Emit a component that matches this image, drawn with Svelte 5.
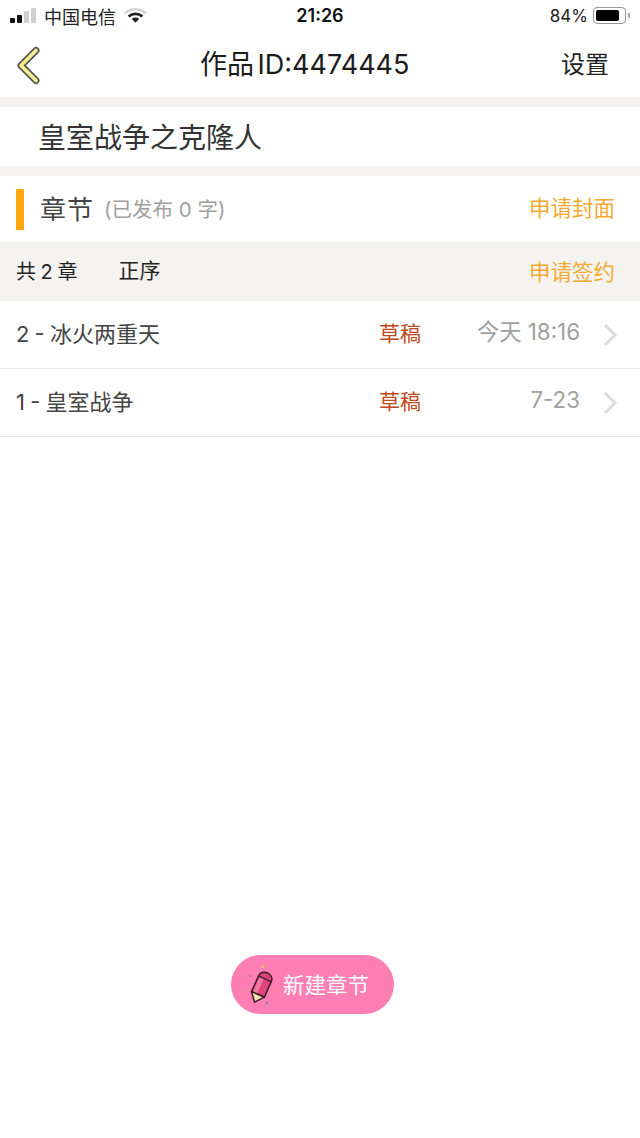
<script>
  const chapters = [
    { title: '2 - 冰火两重天', state: '草稿', time: '今天 18:16' },
    { title: '1 - 皇室战争', state: '草稿', time: '7-23' }
  ];
</script>

<div class="page">
  <div class="status">
    <div class="status-left">
      <span class="signal"><i class="on"></i><i class="on"></i><i></i><i></i></span>
      <span>中国电信</span>
      <svg class="wifi" width="23" height="17" viewBox="0 0 24 17">
        <path d="M1 6.200C7 .6 17 .6 23 6.200" fill="none" stroke="#d4d4d4" stroke-width="2.800"/>
        <path d="M4.800 9.500C9 5.800 15 5.800 19.200 9.500" fill="none" stroke="#222" stroke-width="2.800"/>
        <path d="M8 11.800c2.400-1.600 5.600-1.600 8 0L12 16z" fill="#222"/>
      </svg>
    </div>
    <div class="clock">21:26</div>
    <div class="status-right">
      <span class="pct">84%</span>
      <span class="battery"><b></b></span>
      <span class="nub"></span>
    </div>
  </div>

  <header class="nav">
    <svg class="back" width="28" height="40" viewBox="0 0 28 40">
      <path d="M24 5.500 9 20.500 24 35.500" fill="none" stroke="#555" stroke-width="7" stroke-linecap="round" stroke-linejoin="round"/>
      <path d="M24 5.500 9 20.500 24 35.500" fill="none" stroke="#f7ee90" stroke-width="3.600" stroke-linecap="round" stroke-linejoin="round"/>
    </svg>
    <div class="nav-title">作品 ID:4474445</div>
    <div class="nav-action">设置</div>
  </header>

  <div class="book-title">皇室战争之克隆人</div>

  <div class="section">
    <span class="mark"></span>
    <span class="section-name">章节</span>
    <span class="section-sub">(已发布 0 字)</span>
    <span class="link">申请封面</span>
  </div>

  <div class="toolbar">
    <span class="count">共 2 章</span>
    <span class="sort">正序</span>
    <span class="link">申请签约</span>
  </div>

  {#each chapters as c}
    <div class="row">
      <span class="row-title">{c.title}</span>
      <span class="row-state">{c.state}</span>
      <span class="row-time">{c.time}</span>
      <svg class="chev" width="16" height="26" viewBox="0 0 16 26">
        <path d="M3 3l10 10L3 23" fill="none" stroke="#dcdcdc" stroke-width="3"/>
      </svg>
    </div>
  {/each}

  <div class="spacer">
    <button class="fab">
      <svg class="pencil" width="36" height="40" viewBox="0 0 36 40">
        <circle cx="20" cy="1.500" r="1.600" fill="#f7b267"/>
        <circle cx="7" cy="11" r="1" fill="#8c7fc4"/>
        <circle cx="4" cy="24" r="1" fill="#f08a5d"/>
        <circle cx="32" cy="25" r="1.200" fill="#f08a5d"/>
        <circle cx="24" cy="38" r="1.200" fill="#8c7fc4"/>
        <g transform="rotate(24 18 22.500)">
          <path d="M11 12.500a7 6 0 0 1 14 0V30H11z" fill="#e0447c" stroke="#3a1a28" stroke-width="1.500"/>
          <path d="M12.500 14h4.500v16h-4.500z" fill="#f07aa0"/>
          <path d="M11 13h14" stroke="#3a1a28" stroke-width="1.200"/>
          <path d="M11 30h14l-7 8.500z" fill="#fde3b0" stroke="#3a1a28" stroke-width="1.500" stroke-linejoin="round"/>
        </g>
      </svg>
      <span>新建章节</span>
    </button>
  </div>
</div>

<style>
  :global(body) {
    margin: 0;
    background: #fff;
  }

  .page {
    width: 640px;
    height: 1138px;
    display: flex;
    flex-direction: column;
    overflow: hidden;
    font-family: Inter, "Noto Sans CJK SC", sans-serif;
    color: #222;
  }

  .status {
    height: 32px;
    display: grid;
    grid-template-columns: 1fr auto 1fr;
    align-items: center;
    padding: 0 10px 1px;
    box-sizing: border-box;
    font-size: 18px;
  }

  .status-left {
    display: flex;
    align-items: center;
    gap: 7px;
  }

  .signal {
    display: flex;
    align-items: flex-end;
    gap: 2px;
    height: 15px;
    width: 27px;
  }

  .signal i {
    width: 5px;
    border-radius: 1px;
    background: #d0d0d0;
  }

  .signal i:nth-child(1) { height: 5px; }
  .signal i:nth-child(2) { height: 8px; }
  .signal i:nth-child(3) { height: 12px; }
  .signal i:nth-child(4) { height: 15px; }
  .signal i.on { background: #111; }

  .wifi {
    margin-left: 1px;
  }

  .clock {
    font-weight: 600;
    font-size: 18px;
    color: #111;
  }

  .status-right {
    display: flex;
    align-items: center;
    justify-content: flex-end;
    gap: 5px;
  }

  .pct {
    font-size: 17px;
  }

  .battery {
    width: 33px;
    height: 17px;
    border: 1px solid #999;
    border-radius: 4px;
    padding: 2px;
    box-sizing: border-box;
    display: flex;
  }

  .battery b {
    width: 84%;
    background: #000;
    border-radius: 2px;
  }

  .nub {
    width: 2px;
    height: 5px;
    background: #aaa;
    margin-left: -3px;
  }

  .nav {
    height: 65px;
    display: flex;
    align-items: center;
    position: relative;
    padding: 0 31px 0 12px;
    justify-content: space-between;
  }

  .nav-title {
    font-size: 27px;
    color: #1c1c1c;
    word-spacing: -4px;
    position: absolute;
    left: 200px;
    top: 11px;
  }

  .nav-action {
    font-size: 24px;
    color: #222;
    margin-bottom: 5px;
  }

  .book-title {
    margin: 0;
    border-top: 10px solid #f4f3ef;
    border-bottom: 10px solid #f4f3ef;
    height: 59px;
    box-sizing: content-box;
    line-height: 62px;
    padding-left: 38px;
    font-size: 28px;
    color: #333;
  }

  .section {
    height: 66px;
    display: flex;
    align-items: center;
    padding: 0 25px 0 16px;
  }

  .mark {
    width: 8px;
    height: 41px;
    background: #fca80e;
    margin-right: 16px;
  }

  .section-name {
    font-size: 26px;
    color: #444;
    letter-spacing: 1px;
    margin-bottom: 3px;
  }

  .section-sub {
    font-size: 20.500px;
    color: #a0a0a0;
    margin-left: 10px;
    margin-bottom: 3px;
  }

  .link {
    margin-left: auto;
    font-size: 21.500px;
    color: #f2aa30;
    margin-bottom: 5px;
  }

  .toolbar {
    height: 59px;
    display: flex;
    align-items: center;
    padding: 0 25px 0 16px;
    background: #f4f3ef;
    font-size: 20px;
    color: #222;
  }

  .toolbar .link {
    margin-bottom: 2px;
  }

  .count {
    word-spacing: -1px;
    margin-bottom: 2px;
  }

  .sort {
    margin-left: 41px;
    margin-bottom: 5px;
    font-size: 21px;
  }

  .row {
    height: 67px;
    border-bottom: 1px solid #e6e6e6;
    display: flex;
    align-items: center;
    padding: 0 22px 0 16px;
    box-sizing: content-box;
  }

  .row span {
    line-height: 26px;
  }

  .row-title {
    width: 363px;
    font-size: 22px;
    color: #444;
    word-spacing: -1px;
    margin-bottom: 2px;
  }

  .row-state {
    font-size: 21px;
    color: #bf4a20;
    margin-bottom: 2px;
  }

  .row-time {
    margin-left: auto;
    font-size: 22.300px;
    color: #a0a0a0;
    margin-right: 22px;
    margin-bottom: 5px;
  }

  .spacer {
    flex: 1;
    display: flex;
    justify-content: center;
    align-items: flex-start;
    padding-top: 518px;
  }

  .fab {
    width: 163px;
    height: 59px;
    margin-left: -15px;
    border: 0;
    border-radius: 30px;
    background: #ff7eb3;
    color: #fff;
    display: flex;
    align-items: center;
    padding: 0 0 3px 12px;
    font: inherit;
    font-size: 21.500px;
  }

  .pencil {
    flex: none;
    margin-right: 4px;
    margin-top: 3px;
  }
</style>
